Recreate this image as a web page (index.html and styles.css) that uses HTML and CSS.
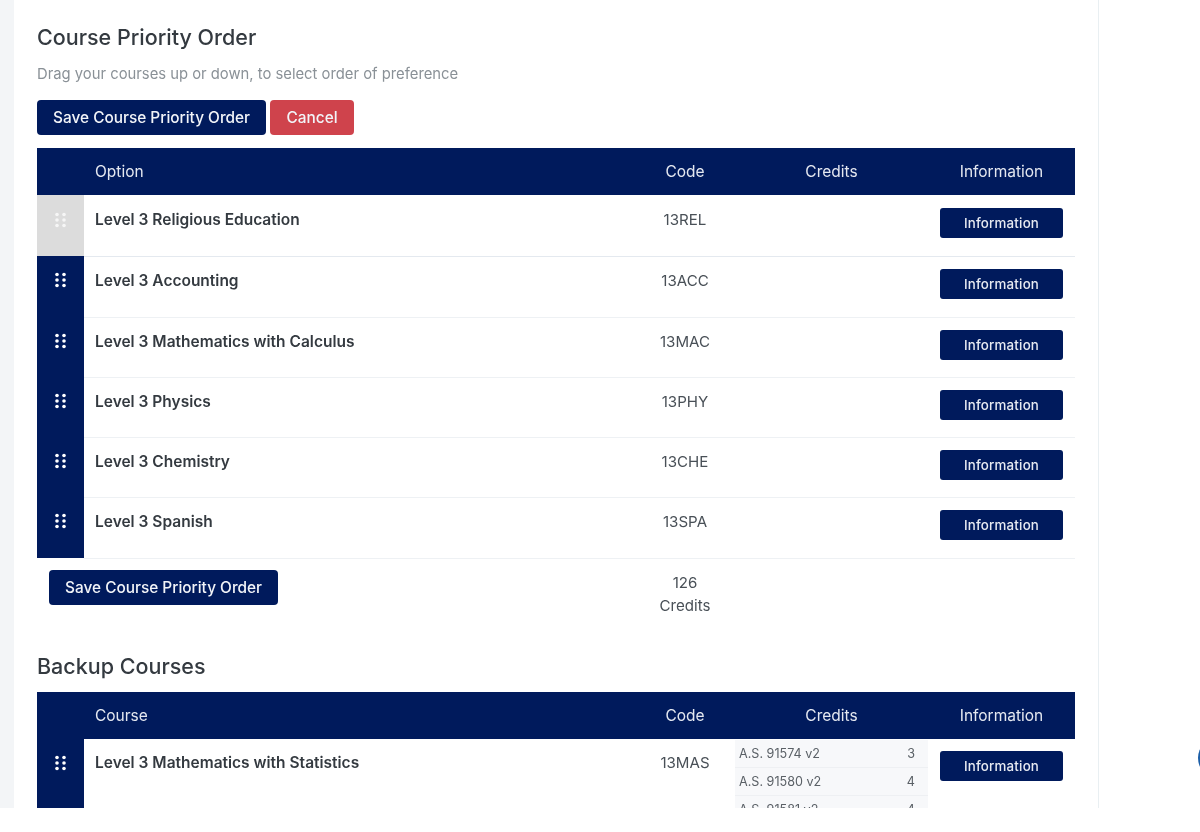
FILE: index.html
```html
<!DOCTYPE html>
<html lang="en">
<head>
<meta charset="utf-8">
<title>Course Priority Order</title>
<link rel="stylesheet" href="styles.css">
</head>
<body>
<div class="viewport">
  <div class="gutter"></div>
  <main class="card">
    <h2 class="title">Course Priority Order</h2>
    <p class="hint">Drag your courses up or down, to select order of preference</p>
    <div class="actions">
      <button class="btn">Save Course Priority Order</button>
      <button class="btn btn-danger">Cancel</button>
    </div>
    <table class="courses">
      <thead>
        <tr><th class="c-handle"></th><th class="c-name">Option</th><th class="c-code">Code</th><th class="c-credits">Credits</th><th class="c-info">Information</th></tr>
      </thead>
      <tbody>
        <tr class="first">
          <td class="handle handle-off"><svg class="grip" viewBox="0 0 11 16"><circle cx="2" cy="2.500" r="1.800"/><circle cx="9" cy="2.500" r="1.800"/><circle cx="2" cy="8" r="1.800"/><circle cx="9" cy="8" r="1.800"/><circle cx="2" cy="13.500" r="1.800"/><circle cx="9" cy="13.500" r="1.800"/></svg></td>
          <td class="name">Level 3 Religious Education</td><td class="code">13REL</td><td></td><td class="info"><button class="btn-sm">Information</button></td>
        </tr>
        <tr class="tall">
          <td class="handle"><svg class="grip" viewBox="0 0 11 16"><circle cx="2" cy="2.500" r="1.800"/><circle cx="9" cy="2.500" r="1.800"/><circle cx="2" cy="8" r="1.800"/><circle cx="9" cy="8" r="1.800"/><circle cx="2" cy="13.500" r="1.800"/><circle cx="9" cy="13.500" r="1.800"/></svg></td>
          <td class="name">Level 3 Accounting</td><td class="code">13ACC</td><td></td><td class="info"><button class="btn-sm">Information</button></td>
        </tr>
        <tr>
          <td class="handle"><svg class="grip" viewBox="0 0 11 16"><circle cx="2" cy="2.500" r="1.800"/><circle cx="9" cy="2.500" r="1.800"/><circle cx="2" cy="8" r="1.800"/><circle cx="9" cy="8" r="1.800"/><circle cx="2" cy="13.500" r="1.800"/><circle cx="9" cy="13.500" r="1.800"/></svg></td>
          <td class="name">Level 3 Mathematics with Calculus</td><td class="code">13MAC</td><td></td><td class="info"><button class="btn-sm">Information</button></td>
        </tr>
        <tr>
          <td class="handle"><svg class="grip" viewBox="0 0 11 16"><circle cx="2" cy="2.500" r="1.800"/><circle cx="9" cy="2.500" r="1.800"/><circle cx="2" cy="8" r="1.800"/><circle cx="9" cy="8" r="1.800"/><circle cx="2" cy="13.500" r="1.800"/><circle cx="9" cy="13.500" r="1.800"/></svg></td>
          <td class="name">Level 3 Physics</td><td class="code">13PHY</td><td></td><td class="info"><button class="btn-sm">Information</button></td>
        </tr>
        <tr>
          <td class="handle"><svg class="grip" viewBox="0 0 11 16"><circle cx="2" cy="2.500" r="1.800"/><circle cx="9" cy="2.500" r="1.800"/><circle cx="2" cy="8" r="1.800"/><circle cx="9" cy="8" r="1.800"/><circle cx="2" cy="13.500" r="1.800"/><circle cx="9" cy="13.500" r="1.800"/></svg></td>
          <td class="name">Level 3 Chemistry</td><td class="code">13CHE</td><td></td><td class="info"><button class="btn-sm">Information</button></td>
        </tr>
        <tr class="tall">
          <td class="handle"><svg class="grip" viewBox="0 0 11 16"><circle cx="2" cy="2.500" r="1.800"/><circle cx="9" cy="2.500" r="1.800"/><circle cx="2" cy="8" r="1.800"/><circle cx="9" cy="8" r="1.800"/><circle cx="2" cy="13.500" r="1.800"/><circle cx="9" cy="13.500" r="1.800"/></svg></td>
          <td class="name">Level 3 Spanish</td><td class="code">13SPA</td><td></td><td class="info"><button class="btn-sm">Information</button></td>
        </tr>
      </tbody>
    </table>
    <div class="summary">
      <button class="btn">Save Course Priority Order</button>
      <div class="total">126<br>Credits</div>
    </div>
    <h2 class="title backup">Backup Courses</h2>
    <table class="courses">
      <thead>
        <tr><th class="c-handle"></th><th class="c-name">Course</th><th class="c-code">Code</th><th class="c-credits">Credits</th><th class="c-info">Information</th></tr>
      </thead>
      <tbody>
        <tr>
          <td class="handle"><svg class="grip" viewBox="0 0 11 16"><circle cx="2" cy="2.500" r="1.800"/><circle cx="9" cy="2.500" r="1.800"/><circle cx="2" cy="8" r="1.800"/><circle cx="9" cy="8" r="1.800"/><circle cx="2" cy="13.500" r="1.800"/><circle cx="9" cy="13.500" r="1.800"/></svg></td>
          <td class="name">Level 3 Mathematics with Statistics</td><td class="code">13MAS</td>
          <td class="standards">
            <div class="std"><span>A.S. 91574 v2</span><span>3</span></div>
            <div class="std"><span>A.S. 91580 v2</span><span>4</span></div>
            <div class="std"><span>A.S. 91581 v2</span><span>4</span></div>
          </td>
          <td class="info"><button class="btn-sm">Information</button></td>
        </tr>
      </tbody>
    </table>
  </main>
  <div class="fab"></div>
</div>
</body>
</html>
```
FILE: styles.css
```css
* { box-sizing: border-box; }
html, body { margin: 0; padding: 0; background: #fff; }
body { font-family: Inter, "Liberation Sans", sans-serif; color: #343a40; }
.viewport { position: relative; display: flex; height: 808px; overflow: hidden; background: #fff; filter: blur(.35px); }
.gutter { flex: 0 0 14px; background: #f3f5f7; }
.card { flex: 0 0 1085px; height: 808px; padding: 0 23px; background: #fff; border-right: 1px solid #e9eff2; overflow: hidden; }
.title { margin: 0; padding-top: 24px; font-size: 21.500px; line-height: 27px; font-weight: 500; color: #343a40; }
.hint { margin: 12px 0 0; font-size: 14.800px; line-height: 22px; color: #8a9197; }
.actions { display: flex; gap: 4px; margin-top: 15px; margin-bottom: 13px; }
.btn { height: 35px; padding: 0 16px; border: 0; border-radius: 4px; background: #001a5c; color: #f2f4f8; font: 500 15.400px Inter, "Liberation Sans", sans-serif; }
.btn-danger { padding: 0 16.500px; background: #cf434c; }
.courses { width: 1038px; table-layout: fixed; border-collapse: collapse; }
.courses th { height: 47px; padding: 0; background: #001a5c; color: #e4e8f0; font-size: 15.500px; font-weight: 400; text-align: center; }
.courses .c-name { text-align: left; padding-left: 11px; }
.c-handle { width: 47px; }
.c-code { width: 100px; }
.c-credits { width: 193px; }
.c-info { width: 147px; }
.courses td { height: 60px; padding: 0; vertical-align: top; border-bottom: 1px solid #eef1f4; }
.courses .tall td { height: 61px; }
.courses .first td { height: 61px; border-bottom-color: #e4e9ef; }
.courses td.handle { background: #001a5c; border-bottom: 0; text-align: center; }
.courses td.handle-off { background: #dcdcdc; }
.grip { display: block; width: 11px; height: 16px; margin: 16px 0 0 18px; fill: #fff; }
.first .grip { margin-top: 17px; }
.handle-off .grip { opacity: .75; }
.name { padding: 13px 0 0 11px !important; font-size: 15.500px; line-height: 22px; font-weight: 600; color: #343a40; }
.code { padding-top: 13px !important; font-size: 15.100px; line-height: 22px; text-align: center; color: #495057; }
.info { padding: 12px 12px 0 0 !important; text-align: right; }
.first .name { padding-top: 14px !important; }
.first .code { padding-top: 14px !important; }
.first .info { padding-top: 13px !important; }
.btn-sm { width: 123px; height: 30px; padding: 0; border: 0; border-radius: 3px; background: #001a5c; color: #e8ebf2; font: 500 13.300px Inter, "Liberation Sans", sans-serif; letter-spacing: .2px; }
.summary { position: relative; display: flex; width: 1038px; height: 85px; padding: 11px 0 0 12px; align-items: flex-start; }
.total { position: absolute; left: 598px; top: 12px; width: 100px; font-size: 15.100px; line-height: 23px; text-align: center; color: #495057; }
.backup { padding-top: 9px; margin-bottom: 12px; }
.standards { padding: 1px 0 0 !important; }
.std { display: flex; justify-content: space-between; width: 193px; height: 28px; padding: 6px 13px 0 4px; background: #f7f8fa; border-bottom: 1px solid #eef0f3; font-size: 12.600px; line-height: 16px; color: #5a6066; }
.fab { position: absolute; left: 1198px; top: 738px; width: 40px; height: 40px; border-radius: 50%; background: #1c5fa8; }
```
